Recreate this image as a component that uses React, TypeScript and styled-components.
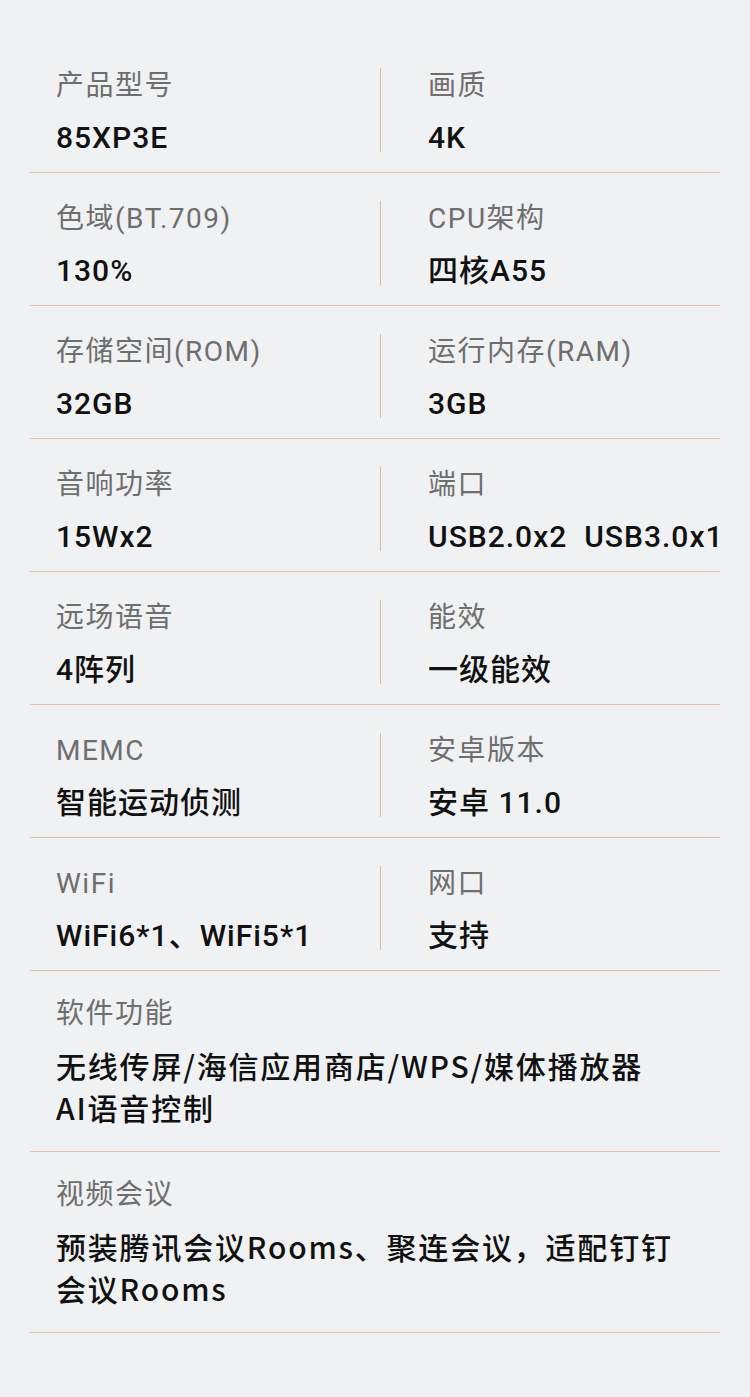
import React from "react";
import styled, { createGlobalStyle } from "styled-components";

const GlobalStyle = createGlobalStyle`
  html, body {
    margin: 0;
    padding: 0;
    background: #f0f1f3;
  }
  body {
    font-family: Roboto, "Noto Sans CJK SC", sans-serif;
  }
`;

const Page = styled.div`
  width: 750px;
  min-height: 1397px;
  box-sizing: border-box;
  padding: 40px 30px 0;
  background: #f0f1f3;
`;

const Row = styled.div<{ $wide?: boolean }>`
  display: grid;
  grid-template-columns: ${(p) => (p.$wide ? "1fr" : "350px 1fr")};
  padding: ${(p) => (p.$wide ? "25px 0 23px" : "28px 0 20px")};
  border-bottom: 1px solid #dfc4a5;
`;

const Cell = styled.div<{ $right?: boolean }>`
  display: flex;
  flex-direction: column;
  gap: 20px;
  padding-left: ${(p) => (p.$right ? "47px" : "26px")};
  border-left: ${(p) => (p.$right ? "1px solid #dcbd9a" : "none")};
`;

const WideCell = styled(Cell)`
  gap: 12px;
`;

const Label = styled.div`
  font-size: 28px;
  line-height: 36px;
  letter-spacing: 1.5px;
  color: #6e6e6e;
  white-space: nowrap;
`;

const Value = styled.div<{ $pre?: boolean }>`
  font-size: 30px;
  line-height: 28px;
  letter-spacing: 1px;
  font-weight: 500;
  color: #111;
  white-space: ${(p) => (p.$pre ? "pre" : "nowrap")};
`;

const WideValue = styled.div`
  font-family: "Noto Sans CJK SC", sans-serif;
  font-size: 30px;
  line-height: 42px;
  letter-spacing: 1.8px;
  font-weight: 500;
  color: #111;
`;

type Spec = { label: string; value: string };

const pairs: [Spec, Spec][] = [
  [
    { label: "产品型号", value: "85XP3E" },
    { label: "画质", value: "4K" },
  ],
  [
    { label: "色域(BT.709)", value: "130%" },
    { label: "CPU架构", value: "四核A55" },
  ],
  [
    { label: "存储空间(ROM)", value: "32GB" },
    { label: "运行内存(RAM)", value: "3GB" },
  ],
  [
    { label: "音响功率", value: "15Wx2" },
    { label: "端口", value: "USB2.0x2  USB3.0x1" },
  ],
  [
    { label: "远场语音", value: "4阵列" },
    { label: "能效", value: "一级能效" },
  ],
  [
    { label: "MEMC", value: "智能运动侦测" },
    { label: "安卓版本", value: "安卓 11.0" },
  ],
  [
    { label: "WiFi", value: "WiFi6*1、WiFi5*1" },
    { label: "网口", value: "支持" },
  ],
];

const wide: { label: string; lines: string[] }[] = [
  {
    label: "软件功能",
    lines: ["无线传屏/海信应用商店/WPS/媒体播放器", "AI语音控制"],
  },
  {
    label: "视频会议",
    lines: ["预装腾讯会议Rooms、聚连会议，适配钉钉", "会议Rooms"],
  },
];

export default function App() {
  return (
    <>
      <GlobalStyle />
      <Page>
        {pairs.map(([l, r]) => (
          <Row key={l.label}>
            <Cell>
              <Label>{l.label}</Label>
              <Value>{l.value}</Value>
            </Cell>
            <Cell $right>
              <Label>{r.label}</Label>
              <Value $pre>{r.value}</Value>
            </Cell>
          </Row>
        ))}
        {wide.map((w) => (
          <Row $wide key={w.label}>
            <WideCell>
              <Label>{w.label}</Label>
              <WideValue>
                {w.lines.map((t) => (
                  <div key={t}>{t}</div>
                ))}
              </WideValue>
            </WideCell>
          </Row>
        ))}
      </Page>
    </>
  );
}
